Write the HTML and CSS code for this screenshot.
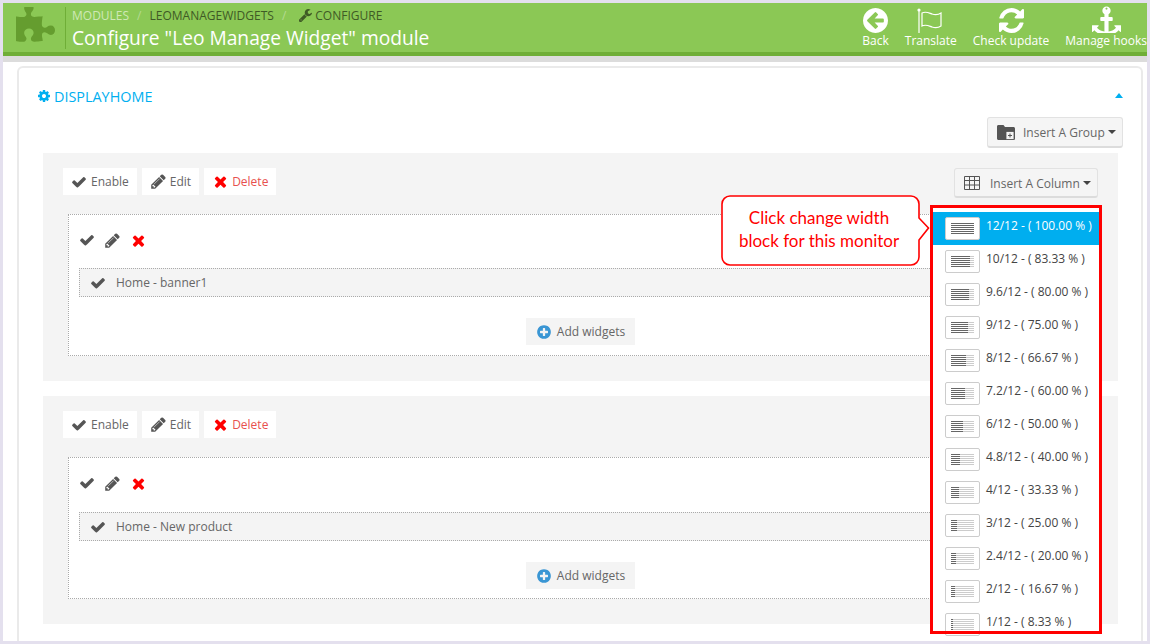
FILE: index.html
```html
<!DOCTYPE html>
<html lang="en">
<head>
<meta charset="utf-8">
<title>Configure "Leo Manage Widget" module</title>
<link rel="stylesheet" href="styles.css">
</head>
<body>
<svg class="defs" width="0" height="0" aria-hidden="true">
  <symbol id="i-check" viewBox="0 0 1792 1792"><path d="M1671 566q0 40-28 68l-724 724-136 136q-28 28-68 28t-68-28l-136-136-362-362q-28-28-28-68t28-68l136-136q28-28 68-28t68 28l294 295 656-657q28-28 68-28t68 28l136 136q28 28 28 68z"/></symbol>
  <symbol id="i-times" viewBox="0 0 1792 1792"><path d="M1490 1322q0 40-28 68l-136 136q-28 28-68 28t-68-28l-294-294-294 294q-28 28-68 28t-68-28l-136-136q-28-28-28-68t28-68l294-294-294-294q-28-28-28-68t28-68l136-136q28-28 68-28t68 28l294 294 294-294q28-28 68-28t68 28l136 136q28 28 28 68t-28 68l-294 294 294 294q28 28 28 68z"/></symbol>
  <symbol id="i-pencil" viewBox="0 0 1792 1792"><path d="M491 1536l91-91-235-235-91 91v107h128v128h107zm523-928q0-22-22-22-10 0-17 7l-542 542q-7 7-7 17 0 22 22 22 10 0 17-7l542-542q7-7 7-17zm-54-192l416 416-832 832h-416v-416zm683 96q0 53-37 90l-166 166-416-416 166-165q36-38 90-38 53 0 91 38l235 234q37 39 37 91z"/></symbol>
  <symbol id="i-plus" viewBox="0 0 1792 1792"><path d="M1344 960v-128q0-26-19-45t-45-19h-256v-256q0-26-19-45t-45-19h-128q-26 0-45 19t-19 45v256h-256q-26 0-45 19t-19 45v128q0 26 19 45t45 19h256v256q0 26 19 45t45 19h128q26 0 45-19t19-45v-256h256q26 0 45-19t19-45zm320-64q0 209-103 385.500t-279.500 279.500-385.500 103-385.500-103-279.500-279.500-103-385.500 103-385.500 279.500-279.500 385.500-103 385.500 103 279.500 279.500 103 385.500z"/></symbol>
</svg>
<div class="frame">
  <header class="topbar">
    <svg class="puzzle" viewBox="128 128 1536 1536"><path d="M1664 1098q0 81-44.500 135t-123.500 54q-41 0-77.500-17.500t-59-38-56.500-38-71-17.500q-110 0-110 124 0 39 16 115t15 115v5q-22 0-33 1-34 3-97.500 11.500t-115.500 13.500-98 5q-61 0-103-26.500t-42-83.500q0-37 17.500-71t38-56.500 38-59 17.500-77.500q0-79-54-123.500t-135-44.500q-84 0-143 45.500t-59 127.500q0 43 15 83t33.500 64.500 33.500 53 15 50.500q0 45-46 89-37 35-117 35-95 0-245-24-9-2-27.500-4t-27.500-4l-13-2q-1 0-3-1-2 0-2-1v-1024q2 1 17.500 3.500t34 5 21.500 3.500q150 24 245 24 80 0 117-35 46-44 46-89 0-22-15-50.500t-33.500-53-33.500-64.500-15-83q0-82 59-127.500t144-45.500q80 0 134 44.500t54 123.500q0 41-17.500 77.500t-38 59-38 56.500-17.500 71q0 57 42 83.500t103 26.500q64 0 180-15t163-17v2q-1 2-3.500 17.500t-5 34-3.500 21.500q-24 150-24 245 0 80 35 117 44 46 89 46 22 0 50.500-15t53-33.500 64.500-33.500 83-15q82 0 127.500 59t45.500 143z"/></svg>
    <div class="heading">
      <div class="crumbs">
        <span class="crumb-light">MODULES</span><span class="sep">/</span><span>LEOMANAGEWIDGETS</span><span class="sep">/</span>
        <svg class="wrench" viewBox="128 128 1600 1600"><path d="M448 1472q0-26-19-45t-45-19-45 19-19 45 19 45 45 19 45-19 19-45zm644-420l-682 682q-37 37-90 37-52 0-91-37l-106-108q-38-36-38-90 0-53 38-91l681-681q39 98 114.500 173.500t173.500 114.500zm634-435q0 39-23 106-47 134-164.500 217.500t-258.500 83.500q-185 0-316.500-131.500t-131.500-316.500 131.500-316.500 316.500-131.500q58 0 121.500 16.500t107.500 46.500q16 11 16 28t-16 28l-293 169v224l193 107q5-3 79-48.500t135.500-81 70.500-35.500q15 0 23.500 10t8.500 25z"/></svg>
        <span>CONFIGURE</span>
      </div>
      <h1 class="title">Configure "Leo Manage Widget" module</h1>
    </div>
    <nav class="actions">
      <a class="action">
        <svg class="action-icon" viewBox="128 128 1536 1536"><path d="M1408 960v-128q0-26-19-45t-45-19h-502l189-189q19-19 19-45t-19-45l-91-91q-18-18-45-18t-45 18l-362 362-91 91q-18 18-18 45t18 45l91 91 362 362q18 18 45 18t45-18l91-91q18-18 18-45t-18-45l-189-189h502q26 0 45-19t19-45zm256-64q0 209-103 385.500t-279.500 279.500-385.500 103-385.500-103-279.500-279.500-103-385.500 103-385.500 279.500-279.500 385.500-103 385.500 103 279.500 279.500 103 385.500z"/></svg>
        <span>Back</span>
      </a>
      <a class="action">
        <svg class="action-icon flag" viewBox="0 0 28 26"><path class="flag-line" d="M2 2v23"/><path class="flag-line" d="M5 5c4-2 7 0 10 1s6 1 9-1v13c-3 2-6 2-9 1s-6-3-10-1z"/><circle cx="2" cy="2" r="1.600"/></svg>
        <span>Translate</span>
      </a>
      <a class="action">
        <svg class="action-icon" viewBox="128 128 1536 1536"><path d="M1639 1056q0 5-1 7-64 268-268 434.500t-478 166.500q-146 0-282.500-55t-243.500-157l-129 129q-19 19-45 19t-45-19-19-45v-448q0-26 19-45t45-19h448q26 0 45 19t19 45-19 45l-137 137q71 66 161 102t187 36q134 0 250-65t186-179q11-17 53-117 8-23 30-23h192q13 0 22.500 9.500t9.500 22.500zm25-800v448q0 26-19 45t-45 19h-448q-26 0-45-19t-19-45 19-45l138-138q-148-137-349-137-134 0-250 65t-186 179q-11 17-53 117-8 23-30 23h-199q-13 0-22.500-9.500t-9.500-22.500v-7q65-268 270-434.500t480-166.500q146 0 284 55.500t245 156.500l130-129q19-19 45-19t45 19 19 45z"/></svg>
        <span>Check update</span>
      </a>
      <a class="action">
        <svg class="action-icon anchor" viewBox="0 128 1792 1600"><path d="M960 256q0-26-19-45t-45-19-45 19-19 45 19 45 45 19 45-19 19-45zm832 1056v352q0 22-20 30-8 2-12 2-12 0-23-9l-93-93q-119 143-318.500 226.500t-429.500 83.500-429.500-83.500-318.500-226.500l-93 93q-9 9-23 9-4 0-12-2-20-8-20-30v-352q0-14 9-23t23-9h352q22 0 30 20 8 19-7 35l-100 100q67 91 189.500 153.500t271.500 82.500v-647h-192q-26 0-45-19t-19-45v-128q0-26 19-45t45-19h192v-163q-58-34-93-92.500t-35-128.500q0-106 75-181t181-75 181 75 75 181q0 70-35 128.500t-93 92.500v163h192q26 0 45 19t19 45v128q0 26-19 45t-45 19h-192v647q149-20 271.500-82.500t189.500-153.500l-100-100q-15-16-7-35 8-20 30-20h352q14 0 23 9t9 23z"/></svg>
        <span>Manage hooks</span>
      </a>
    </nav>
  </header>
  <div class="topbar-shadow"></div>

  <main class="page">
    <section class="panel">
      <div class="panel-head">
        <h2 class="panel-title">
          <svg class="cog" viewBox="128 128 1536 1536"><path d="M1152 896q0-106-75-181t-181-75-181 75-75 181 75 181 181 75 181-75 75-181zm512-109v222q0 12-8 23t-20 13l-185 28q-19 54-39 91 35 50 107 138 10 12 10 25t-9 23q-27 37-99 108t-94 71q-12 0-26-9l-138-108q-44 23-91 38-16 136-29 186-7 28-36 28h-222q-14 0-24.500-8.500t-11.500-21.500l-28-184q-49-16-90-37l-141 107q-10 9-25 9-14 0-25-11-126-114-165-168-7-10-7-23 0-12 8-23 15-21 51-66.500t54-70.500q-27-50-41-99l-183-27q-13-2-21-12.500t-8-23.500v-222q0-12 8-23t19-13l186-28q14-46 39-92-40-57-107-138-10-12-10-24 0-10 9-23 26-36 98.500-107.500t94.500-71.500q13 0 26 10l138 107q44-23 91-38 16-136 29-186 7-28 36-28h222q14 0 24.500 8.500t11.500 21.500l28 184q49 16 90 37l142-107q9-9 24-9 13 0 25 10 129 119 165 170 7 8 7 22 0 12-8 23-15 21-51 66.500t-54 70.500q26 50 41 98l183 28q13 2 21 12.500t8 23.500z"/></svg>
          DISPLAYHOME
        </h2>
        <span class="caret-up"></span>
      </div>
      <div class="group-tools">
        <button class="drop-btn group-btn">
          <svg class="folder" viewBox="0 0 18 16"><path d="M0 2.500C0 1.500.7 1 1.500 1h5L8 3h8.500c.8 0 1.500.6 1.500 1.500V14.500c0 .9-.7 1.500-1.500 1.500h-15C.7 16 0 15.400 0 14.500z"/><rect class="folder-box" x="9" y="7.500" width="8" height="8"/><path class="folder-plus" d="M13 9.500v4M11 11.500h4"/></svg>
          Insert A Group<span class="caret"></span>
        </button>
      </div>

      <article class="group">
        <div class="toolbar">
          <div class="tool-btns">
            <a class="tool tool-enable"><svg class="ico ico-check"><use href="#i-check"/></svg>Enable</a>
            <a class="tool"><svg class="ico ico-18"><use href="#i-pencil"/></svg>Edit</a>
            <a class="tool tool-danger"><svg class="ico ico-18"><use href="#i-times"/></svg>Delete</a>
          </div>
          <div class="column-menu">
            <button class="drop-btn column-btn">
              <svg class="grid-ico" viewBox="0 0 16 14"><path d="M.5.500h15v13H.5zM.5 4.500h15M.5 9h15M5.500.500v13M10.500.500v13"/></svg>
              Insert A Column<span class="caret"></span>
            </button>
            <div class="callout">
              <svg class="callout-shape" viewBox="0 0 210 72"><path d="M9 1H190a8 8 0 0 1 8 8V23L207.500 33 198 45V62a8 8 0 0 1-8 8H9a8 8 0 0 1-8-8V9a8 8 0 0 1 8-8z"/></svg>
              <p class="callout-text">Click change width<br>block for this monitor</p>
            </div>
            <ul class="width-list">
              <li class="width-item active"><span class="thumb"><span class="fill" style="width:100%"></span><span class="rest"></span></span>12/12 - ( 100.00 % )</li>
              <li class="width-item"><span class="thumb"><span class="fill" style="width:83.33%"></span><span class="rest"></span></span>10/12 - ( 83.33 % )</li>
              <li class="width-item"><span class="thumb"><span class="fill" style="width:80%"></span><span class="rest"></span></span>9.6/12 - ( 80.00 % )</li>
              <li class="width-item"><span class="thumb"><span class="fill" style="width:75%"></span><span class="rest"></span></span>9/12 - ( 75.00 % )</li>
              <li class="width-item"><span class="thumb"><span class="fill" style="width:66.67%"></span><span class="rest"></span></span>8/12 - ( 66.67 % )</li>
              <li class="width-item"><span class="thumb"><span class="fill" style="width:60%"></span><span class="rest"></span></span>7.2/12 - ( 60.00 % )</li>
              <li class="width-item"><span class="thumb"><span class="fill" style="width:50%"></span><span class="rest"></span></span>6/12 - ( 50.00 % )</li>
              <li class="width-item"><span class="thumb"><span class="fill" style="width:40%"></span><span class="rest"></span></span>4.8/12 - ( 40.00 % )</li>
              <li class="width-item"><span class="thumb"><span class="fill" style="width:33.33%"></span><span class="rest"></span></span>4/12 - ( 33.33 % )</li>
              <li class="width-item"><span class="thumb"><span class="fill" style="width:25%"></span><span class="rest"></span></span>3/12 - ( 25.00 % )</li>
              <li class="width-item"><span class="thumb"><span class="fill" style="width:20%"></span><span class="rest"></span></span>2.4/12 - ( 20.00 % )</li>
              <li class="width-item"><span class="thumb"><span class="fill" style="width:16.67%"></span><span class="rest"></span></span>2/12 - ( 16.67 % )</li>
              <li class="width-item"><span class="thumb"><span class="fill" style="width:8.33%"></span><span class="rest"></span></span>1/12 - ( 8.33 % )</li>
            </ul>
            <div class="red-frame"></div>
          </div>
        </div>
        <div class="column">
          <div class="col-tools">
            <svg class="ico ico-check"><use href="#i-check"/></svg>
            <svg class="ico ico-18"><use href="#i-pencil"/></svg>
            <svg class="ico ico-18 red"><use href="#i-times"/></svg>
          </div>
          <div class="widget-row"><svg class="ico ico-check"><use href="#i-check"/></svg>Home - banner1</div>
          <div class="add-row"><a class="add-btn"><svg class="ico ico-16 blue"><use href="#i-plus"/></svg>Add widgets</a></div>
        </div>
      </article>

      <article class="group">
        <div class="toolbar">
          <div class="tool-btns">
            <a class="tool tool-enable"><svg class="ico ico-check"><use href="#i-check"/></svg>Enable</a>
            <a class="tool"><svg class="ico ico-18"><use href="#i-pencil"/></svg>Edit</a>
            <a class="tool tool-danger"><svg class="ico ico-18"><use href="#i-times"/></svg>Delete</a>
          </div>
        </div>
        <div class="column">
          <div class="col-tools">
            <svg class="ico ico-check"><use href="#i-check"/></svg>
            <svg class="ico ico-18"><use href="#i-pencil"/></svg>
            <svg class="ico ico-18 red"><use href="#i-times"/></svg>
          </div>
          <div class="widget-row"><svg class="ico ico-check"><use href="#i-check"/></svg>Home - New product</div>
          <div class="add-row"><a class="add-btn"><svg class="ico ico-16 blue"><use href="#i-plus"/></svg>Add widgets</a></div>
        </div>
      </article>
    </section>
  </main>
</div>
</body>
</html>
```
FILE: styles.css
```css
* { box-sizing: border-box; }
html, body { margin: 0; height: 100%; overflow: hidden; }
body { background: #e4e0ee; font-family: "Open Sans", "Liberation Sans", sans-serif; font-size: 12px; color: #666; }
.defs { position: absolute; }
.frame { margin: 3px 3px 0; height: 638px; overflow: hidden; background: #fff; display: flex; flex-direction: column; }

.topbar { height: 53px; flex: none; background: #8bc855; border-bottom: 4px solid #6fae37; display: flex; align-items: flex-start; padding-left: 13px; }
.puzzle { width: 41px; height: 37px; margin-top: 4px; fill: #659d2f; flex: none; }
.heading { margin: 4px 0 0 8px; height: 42px; border-left: 1px solid #6fae37; padding-left: 6px; flex: 1; }
.crumbs { display: flex; align-items: center; height: 17px; font-size: 12px; color: #3f5a25; }
.crumb-light { color: #cfe8b6; }
.sep { color: #b5da92; margin: 0 8px; }
.sep + svg { margin-left: 5px; }
.wrench { width: 13px; height: 13px; fill: #3f5a25; margin-right: 3px; }
.title { margin: 1px 0 0; font-size: 19.200px; font-weight: 400; line-height: 26px; color: #fff; white-space: nowrap; }
.actions { display: flex; gap: 16px; }
.action { display: flex; flex-direction: column; align-items: center; color: #fff; font-size: 12px; line-height: 16px; white-space: nowrap; padding-top: 5px; }
.action-icon { width: 25px; height: 25px; fill: #fff; }
.flag { width: 28px; height: 26px; margin: 0 0 -1px; }
.flag-line { fill: none; stroke: #fff; stroke-width: 1.200; }
.anchor { width: 29px; height: 27px; margin: -2px 0 0; }

.topbar-shadow { height: 6px; flex: none; background: #dcdcdc; }

.page { flex: 1; padding: 4px 4px 0 14px; min-height: 0; }
.panel { border: 2px solid #eaeaea; border-bottom: 0; border-radius: 6px 6px 0 0; height: 100%; padding: 0 18px 0 24px; position: relative; }
.panel-head { display: flex; justify-content: space-between; align-items: center; height: 49px; }
.panel-title { margin: 7px 0 0 -5px; font-size: 14.400px; font-weight: 400; color: #00aff0; display: flex; align-items: center; gap: 4px; }
.cog { width: 12px; height: 12px; fill: #00aff0; }
.caret-up { width: 0; height: 0; margin: 6px 0 0 0; border: 4.500px solid transparent; border-top: 0; border-bottom: 5px solid #00aff0; }

.group-tools { display: flex; justify-content: flex-end; height: 36px; }
.drop-btn { display: inline-flex; align-items: center; height: 30px; padding: 1px 5px 0 9px; background: #f5f5f5; border: 1px solid #e2e2e2; border-bottom: 2px solid #dcdcdc; border-radius: 3px; font: 12px "Open Sans", "Liberation Sans", sans-serif; color: #666; white-space: nowrap; }
.group-btn { width: 136px; height: 31px; padding: 0 5px 0 9px; }
.column-btn { width: 144px; }
.folder { width: 18px; height: 16px; fill: #555; margin-right: 8px; }
.folder-box { fill: #f5f5f5; stroke: #555; stroke-width: .8; }
.folder-plus { fill: none; stroke: #555; stroke-width: 1; }
.grid-ico { width: 16px; height: 14px; fill: none; stroke: #555; stroke-width: 1; margin-right: 10px; }
.caret { width: 0; height: 0; margin-left: 3px; border: 4px solid transparent; border-bottom: 0; border-top: 4px solid #444; }

.group { background: #f4f4f4; padding: 15px 20px 25px; height: 228px; margin: 0 0 15px; width: 1075px; }
.toolbar { display: flex; justify-content: space-between; align-items: flex-start; height: 46px; }
.tool-btns { display: flex; gap: 5px; }
.tool { display: flex; align-items: center; gap: 3px; height: 27px; padding: 0 8px; background: #fff; color: #666; white-space: nowrap; }
.tool-enable { gap: 4px; }
.tool-danger { color: #e8504e; }
.tool-danger .ico { fill: #f00; }
.ico { fill: #555; flex: none; }
.ico-check { width: 16px; height: 16px; }
.ico-16 { width: 16px; height: 16px; }
.ico-18 { width: 17px; height: 17px; }
.red { fill: #f00; }
.blue { fill: #3a96d4; }

.column-menu { position: relative; }
.callout { position: absolute; left: -233px; top: 27px; width: 210px; height: 72px; }
.callout-shape { display: block; width: 210px; height: 72px; fill: #fff; stroke: #f00; stroke-width: 1.600; }
.callout-text { position: absolute; left: 0; top: 11px; width: 196px; margin: 0; text-align: center; font: 17px/23px Lato, "Open Sans", sans-serif; color: #f00; }
.width-list { position: absolute; left: -24px; top: 37px; width: 172px; height: 436px; margin: 0; padding: 7px 2px 0; list-style: none; background: #fff; overflow: hidden; }
.width-item { display: flex; align-items: flex-start; height: 33px; padding: 5px 0 0 13px; font-size: 12px; line-height: 18px; color: #444; white-space: nowrap; }
.width-item.active { background: #00aeef; color: #fff; }
.thumb { display: flex; align-items: center; width: 35px; height: 23px; margin-right: 6px; padding: 0 5px; background: #fff; border: 1px solid #ccc; border-radius: 2px; flex: none; }
.fill, .rest { display: block; height: 11px; }
.fill { flex: none; background: repeating-linear-gradient(#666 0 1px, #fff 1px 2px); }
.rest { flex: 1; background: repeating-linear-gradient(#ccc 0 1px, #fff 1px 2px); }
.red-frame { position: absolute; left: -24px; top: 37px; width: 172px; height: 429px; border: 3px solid #f00; }

.column { margin: 0 5px; height: 142px; border: 1px dotted #aaa; background: #fff; padding: 0 10px; }
.col-tools { display: flex; align-items: center; gap: 9px; height: 53px; padding-bottom: 3px; }
.widget-row { display: flex; align-items: center; gap: 10px; height: 29px; padding-left: 10px; background: #f4f4f4; border: 1px dotted #aaa; color: #666; }
.group + .group .widget-row { margin-top: 1px; }
.add-row { display: flex; justify-content: center; padding-top: 21px; }
.add-btn { display: flex; align-items: center; gap: 5px; height: 27px; padding: 0 10px; background: #f4f4f4; color: #666; }
```
